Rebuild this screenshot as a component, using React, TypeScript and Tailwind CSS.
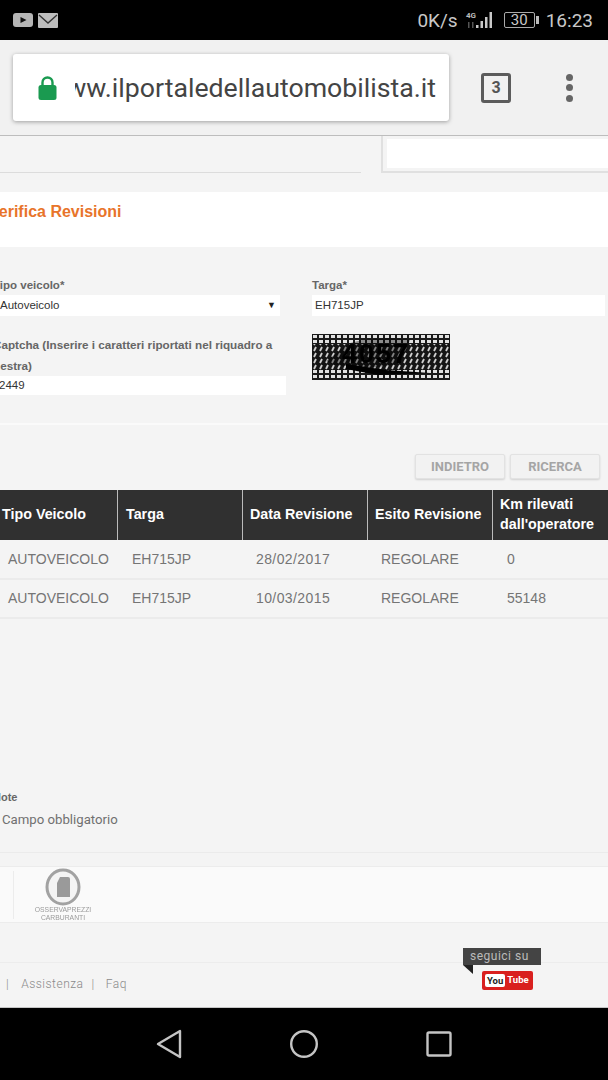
import React from "react";

const headers = ["Tipo Veicolo", "Targa", "Data Revisione", "Esito Revisione"];

const rows = [
  ["AUTOVEICOLO", "EH715JP", "28/02/2017", "REGOLARE", "0"],
  ["AUTOVEICOLO", "EH715JP", "10/03/2015", "REGOLARE", "55148"],
];

function StatusBar() {
  return (
    <div className="h-10 bg-black flex items-center pl-[13px] pr-[15px] text-[#c8c8c8] shrink-0">
      {/* app notifiche */}
      <svg width="20" height="14" viewBox="0 0 20 14">
        <rect width="20" height="14" rx="3" fill="#b5b5b5" />
        <path d="M7.5 4l6 3-6 3z" fill="#111" />
      </svg>
      <svg width="20" height="15" viewBox="0 0 20 15" className="ml-[5px]">
        <rect width="20" height="15" rx="1" fill="#bdbdbd" />
        <path d="M1 2l9 8 9-8" fill="none" stroke="#333" strokeWidth="1.4" />
      </svg>
      <div className="ml-auto flex items-center">
        <span className="text-[19px] leading-none">0K/s</span>
        <svg width="32" height="20" viewBox="0 0 32 20" className="ml-[7px]">
          <text x="1" y="8" fontSize="8" fontWeight="700" fill="#bbb" fontFamily="Roboto, sans-serif">4G</text>
          <rect x="3" y="12" width="1.5" height="6" fill="#555" />
          <rect x="7" y="12" width="1.5" height="6" fill="#555" />
          <rect x="11" y="15" width="2.5" height="3" fill="#c8c8c8" />
          <rect x="15.5" y="11" width="2.5" height="7" fill="#c8c8c8" />
          <rect x="20" y="7" width="2.5" height="11" fill="#c8c8c8" />
          <rect x="24.5" y="2" width="2.5" height="16" fill="#c8c8c8" />
        </svg>
        <div className="ml-[7px] flex items-center">
          <div className="w-[31px] h-[16px] border border-[#aaa] rounded-[2px] flex items-center justify-center text-[15px] leading-none">
            30
          </div>
          <div className="w-[3px] h-[8px] bg-[#bbb] ml-[1px]" />
        </div>
        <span className="text-[19px] leading-none ml-[7px]">16:23</span>
      </div>
    </div>
  );
}

function BrowserBar() {
  return (
    <div className="h-[96px] bg-[#f1f1f1] border-b border-[#bdbdbd] shrink-0 flex items-center pl-[13px]">
      <div className="w-[436px] h-[67px] bg-white rounded-[3px] shadow-[0_1px_4px_rgba(0,0,0,0.35)] flex items-center pl-[25px]">
        <svg width="19" height="24" viewBox="0 0 19 24">
          <path d="M4.5 10V6.5a5 5 0 0 1 10 0V10" fill="none" stroke="#1a9a50" strokeWidth="2.4" />
          <rect x="0.5" y="9" width="18" height="15" rx="2.5" fill="#1a9a50" />
        </svg>
        <div className="ml-[18px] w-[361px] overflow-hidden flex justify-end">
          <span className="text-[26.7px] leading-[32px] text-[#444] whitespace-nowrap">
            www.ilportaledellautomobilista.it
          </span>
        </div>
      </div>
      <div className="ml-[32px] w-[30px] h-[30px] border-[3px] border-[#5c5c5c] rounded-[3px] flex items-center justify-center text-[16px] font-bold text-[#555]">
        3
      </div>
      <div className="ml-[55px] flex flex-col gap-[3.5px]">
        <div className="w-[7px] h-[7px] rounded-full bg-[#666]" />
        <div className="w-[7px] h-[7px] rounded-full bg-[#666]" />
        <div className="w-[7px] h-[7px] rounded-full bg-[#666]" />
      </div>
    </div>
  );
}

function Captcha() {
  return (
    <svg width="138" height="46" viewBox="0 0 138 46" className="blur-[0.5px]">
      <defs>
        <pattern id="griglia" width="6" height="5" patternUnits="userSpaceOnUse">
          <rect width="6" height="5" fill="#1a1a1a" />
          <rect x="1" y="1" width="4" height="3" fill="#e2e2e2" />
        </pattern>
        <pattern id="trame" width="6" height="6" patternUnits="userSpaceOnUse">
          <rect width="6" height="6" fill="#151515" />
          <path d="M2 5L4 1" stroke="#d0d0d0" strokeWidth="1.8" />
        </pattern>
      </defs>
      <rect width="138" height="46" fill="url(#griglia)" />
      <rect x="0" y="10" width="138" height="26" fill="url(#trame)" />
      <path d="M14 27L38 9l12-3 28-2 20 2-4 10-6 14-30 4-36-3z" fill="#000" opacity="0.38" />
      <text x="30" y="29" fontSize="27" fontWeight="700" fill="#000" fontFamily="Liberation Sans, sans-serif" letterSpacing="2">
        4057
      </text>
      <path d="M34 30l40 6 44 3-52 2-32-6z" fill="#000" />
    </svg>
  );
}

function Form() {
  return (
    <div className="mt-[31px] grid grid-cols-[312px_293px] text-[#666]">
      <div>
        <p className="-ml-[7px] text-[11.5px] font-bold leading-[14px] h-[17px]">Tipo veicolo*</p>
        <div className="w-[280px] h-[21px] bg-white flex items-center justify-between text-[11.5px] text-[#333] pr-[4px]">
          <span>Autoveicolo</span>
          <span className="text-[9px] text-[#222]">▼</span>
        </div>
        <p className="mt-[18px] -ml-[7px] w-[295px] text-[11.7px] font-bold leading-[21px]">
          Captcha (Inserire i caratteri riportati nel riquadro a
          <br />
          destra)
        </p>
        <div className="-ml-[1px] w-[287px] h-[19px] bg-white flex items-center text-[11.5px] text-[#333]">
          2449
        </div>
      </div>
      <div>
        <p className="text-[11.5px] font-bold leading-[14px] h-[17px]">Targa*</p>
        <div className="h-[21px] bg-white flex items-center pl-[3px] text-[11.5px] text-[#333]">EH715JP</div>
        <div className="mt-[18px]">
          <Captcha />
        </div>
      </div>
    </div>
  );
}

function RevisionTable() {
  return (
    <div>
      <div className="h-[50px] bg-[#303030] grid grid-cols-[118px_125px_125px_125px_115px] text-white text-[14.3px] font-bold">
        <div className="flex items-center border-r border-[#bbb] pl-[2px]">{headers[0]}</div>
        <div className="flex items-center border-r border-[#bbb] pl-[8px]">{headers[1]}</div>
        <div className="flex items-center border-r border-[#bbb] pl-[7px]">{headers[2]}</div>
        <div className="flex items-center border-r border-[#bbb] pl-[7px]">{headers[3]}</div>
        <div className="flex items-center pl-[7px] pb-[2px] leading-[20px]">
          Km rilevati
          <br />
          dall'operatore
        </div>
      </div>
      {rows.map((r, i) => (
        <div
          key={r[2]}
          className={`${i === 0 ? "h-[40px]" : "h-[39px]"} border-b-2 border-[#ebebeb] grid grid-cols-[118px_125px_125px_125px_115px] items-center text-[14px] text-[#757575]`}
        >
          <div className="pl-[8px]">{r[0]}</div>
          <div className="pl-[14px]">{r[1]}</div>
          <div className="pl-[13px] tracking-[0.4px]">{r[2]}</div>
          <div className="pl-[13px]">{r[3]}</div>
          <div className="pl-[14px]">{r[4]}</div>
        </div>
      ))}
    </div>
  );
}

function OsservaprezziLogo() {
  return (
    <div className="flex flex-col items-center w-[64px] blur-[0.4px]">
      <svg width="36" height="38" viewBox="0 0 36 38">
        <ellipse cx="18" cy="19" rx="16" ry="17" fill="#f4f4f4" stroke="#a2a2a2" strokeWidth="3" />
        <path d="M12 15l3-6h8a2 2 0 0 1 2 2v18H12z" fill="#9a9a9a" />
      </svg>
      <span className="text-[6.8px] leading-[8px] text-[#9a9a9a] whitespace-nowrap">OSSERVAPREZZI</span>
      <span className="text-[6.8px] leading-[8px] text-[#9a9a9a]">CARBURANTI</span>
    </div>
  );
}

function Footer() {
  return (
    <div className="h-[45px] border-t border-[#ececec] relative flex items-center pl-[6px] pb-[2px] text-[12px] tracking-[0.5px] text-[#8a8a8a] font-light">
      <span>|</span>
      <span className="ml-[12px]">Assistenza</span>
      <span className="ml-[8px]">|</span>
      <span className="ml-[11px]">Faq</span>
      {/* seguici su, sopra il bordo */}
      <div className="absolute left-[463px] -top-[15px] w-[78px] h-[17px] bg-[#444] text-[#bbb] text-[12px] leading-[16px] pl-[7px] font-normal">
        seguici su
      </div>
      <div className="absolute left-[463px] top-[2px] w-0 h-0 border-t-[9px] border-t-[#222] border-l-[10px] border-l-transparent" />
      <div className="absolute left-[482px] top-[8px] w-[51px] h-[19px] bg-[#d9201f] rounded-[2px] flex items-center pl-[3px] text-[9.5px] tracking-normal">
        <span className="bg-white text-[#222] rounded-[2px] px-[2px] leading-[13px] font-bold">You</span>
        <span className="text-white ml-[2px] font-bold">Tube</span>
      </div>
    </div>
  );
}

function NavBar() {
  return (
    <div className="h-[72px] bg-black shrink-0 flex items-center pl-[156px]">
      <svg width="26" height="30" viewBox="0 0 26 30">
        <path d="M24 2v26L2 15z" fill="none" stroke="#c4c4c4" strokeWidth="2.4" strokeLinejoin="round" />
      </svg>
      <svg width="30" height="30" viewBox="0 0 30 30" className="ml-[107px]">
        <circle cx="15" cy="15" r="12.8" fill="none" stroke="#c4c4c4" strokeWidth="2.4" />
      </svg>
      <svg width="26" height="26" viewBox="0 0 26 26" className="ml-[107px]">
        <rect x="1.5" y="1.5" width="23" height="23" rx="1.5" fill="none" stroke="#c4c4c4" strokeWidth="2.4" />
      </svg>
    </div>
  );
}

export default function App() {
  return (
    <div className="w-[608px] h-[1080px] overflow-hidden flex flex-col bg-[#f4f4f4] font-['Roboto',sans-serif]">
      <StatusBar />
      <BrowserBar />

      <div className="flex-1 flex flex-col font-['Liberation_Sans',Arial,sans-serif]">
        {/* striscia superiore */}
        <div className="h-[37px] flex justify-between">
          <div className="w-[361px] border-b border-[#dcdcdc]" />
          <div className="w-[227px] border-l-2 border-b-2 border-[#e0e0e0] pl-[4px] pt-[3px] pb-[3px]">
            <div className="h-full bg-white" />
          </div>
        </div>

        <div className="mt-[19px] h-[55px] bg-white pt-[9px]">
          <h1 className="-ml-[11px] text-[16px] leading-[22px] font-bold text-[#e8742a]">Verifica Revisioni</h1>
        </div>

        <Form />

        <div className="mt-[28px] h-[2px] bg-[#fafafa]" />

        <div className="mt-[29px] flex justify-end gap-[5px] pr-[8px] font-['Roboto',sans-serif]">
          <button
            type="button"
            className="w-[90px] h-[25px] bg-[#f2f2f2] border border-[#e2e2e2] rounded-[2px] shadow-[0_1px_2px_rgba(0,0,0,0.15)] text-[13px] font-bold text-[#a5a5a5]"
          >
            INDIETRO
          </button>
          <button
            type="button"
            className="w-[90px] h-[25px] bg-[#f2f2f2] border border-[#e2e2e2] rounded-[2px] shadow-[0_1px_2px_rgba(0,0,0,0.15)] text-[13px] font-bold text-[#a5a5a5]"
          >
            RICERCA
          </button>
        </div>

        <div className="mt-[11px]">
          <RevisionTable />
        </div>

        <p className="mt-[171px] -ml-[7px] text-[11px] leading-[14px] font-bold text-[#666]">Note</p>
        <p className="mt-[8px] pl-[2px] text-[13.2px] leading-[16px] text-[#707070] font-['Roboto',sans-serif]">
          Campo obbligatorio
        </p>

        <div className="mt-[24px] h-[1px] bg-[#ebebeb]" />

        <div className="mt-[13px] h-[57px] bg-[#fafafa] border-y border-[#ececec] flex items-center pl-[13px]">
          <div className="w-[1px] h-[48px] bg-[#ececec]" />
          <div className="ml-[17px]">
            <OsservaprezziLogo />
          </div>
        </div>

        <div className="mt-[39px] font-['Roboto',sans-serif]">
          <Footer />
        </div>
      </div>

      <div className="h-[1px] bg-[#c4c4c4] shrink-0" />
      <NavBar />
    </div>
  );
}
